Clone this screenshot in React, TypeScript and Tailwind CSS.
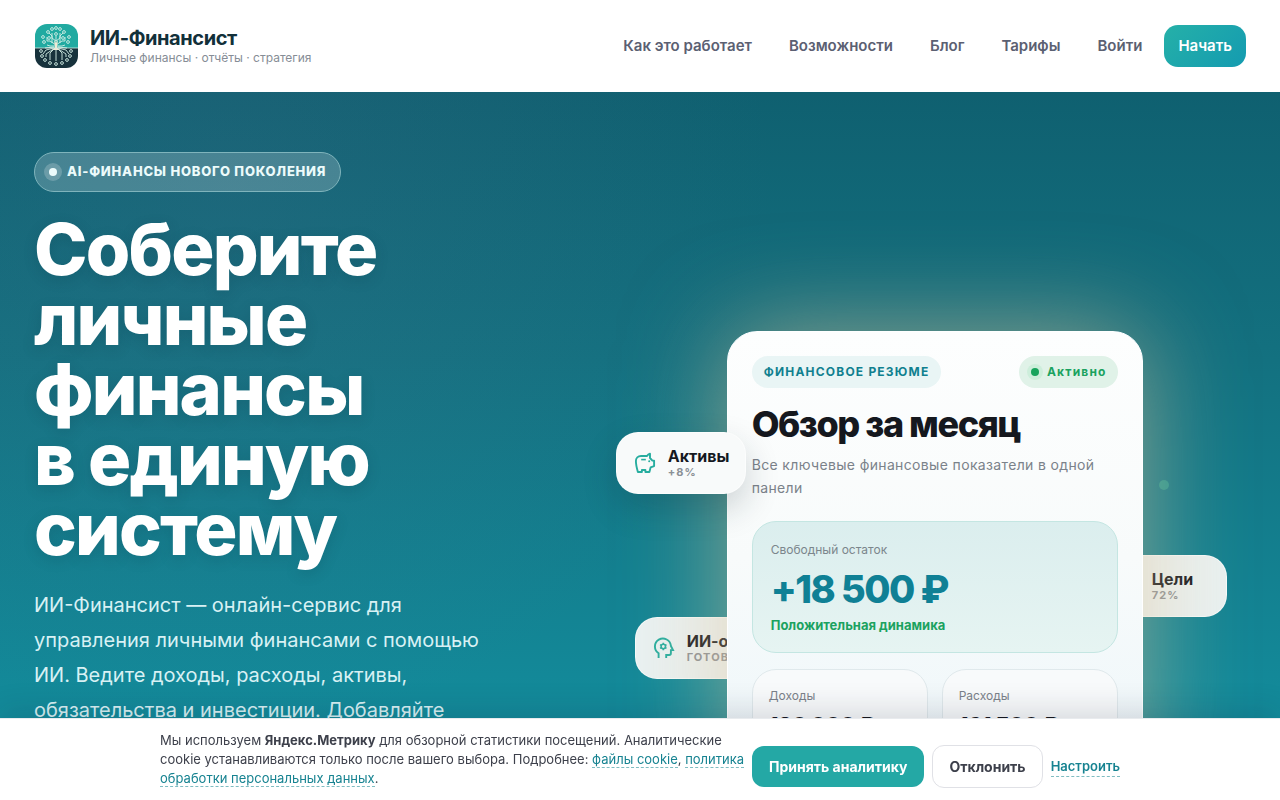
import { ReactNode } from 'react';

const navItems = ['Как это работает', 'Возможности', 'Блог', 'Тарифы'];

const stats = [
  { label: 'Доходы', value: '180 000 ₽' },
  { label: 'Расходы', value: '161 500 ₽' },
];

const branches = [
  'M22 24V12', 'M22 17l-4-3V9', 'M22 17l4-3V9', 'M22 21l-6-4h-3v-4', 'M22 21l6-4h3v-4',
  'M21 22h-5l-3-1', 'M23 22h5l3-1', 'M18 19v-7l-3-3', 'M26 19v-7l3-3', 'M22 23v14',
  'M21 24l-5 5v7', 'M23 24l5 5v7', 'M21 24l-9 6v3', 'M23 24l9 6v3', 'M20 24l-8 2-3 4',
  'M24 24l8 2 3 4', 'M20 23l-9 1', 'M24 23l9 1',
];

const nodes = [
  [22, 4], [18, 5], [26, 5], [14, 8], [30, 8], [9, 13], [35, 13], [15, 14], [29, 14],
  [10, 18], [34, 18], [22, 10], [7, 27], [37, 27], [8, 32], [36, 32], [11, 36], [33, 36],
  [16, 39], [28, 39], [22, 40],
];

const Logo = () => (
  <svg viewBox="0 0 44 44" className="size-11 shrink-0" aria-hidden="true">
    <defs>
      <clipPath id="logo-clip">
        <rect x="1" width="43" height="44" rx="12" />
      </clipPath>
    </defs>
    <g clipPath="url(#logo-clip)">
      <rect width="44" height="24" fill="#21aaa1" />
      <rect y="24" width="44" height="20" fill="#17323c" />
      <g fill="none" stroke="#d5efe6" strokeWidth="0.9">
        {branches.map((d) => (
          <path key={d} d={d} />
        ))}
      </g>
      <path d="M20 16l2 3 2-3-1 7 2 3h-6l2-3z" fill="#f1ead5" />
      <path d="M1 24h43" stroke="#d5efe6" strokeWidth="0.8" />
      {nodes.map(([x, y]) => (
        <circle
          key={`${x}-${y}`}
          cx={x}
          cy={y}
          r="1.4"
          fill={y < 24 ? '#21aaa1' : '#17323c'}
          stroke="#d5efe6"
          strokeWidth="0.9"
        />
      ))}
    </g>
  </svg>
);

const PiggyIcon = () => (
  <svg
    viewBox="0 0 22 22"
    className="size-[22px] shrink-0"
    fill="none"
    stroke="currentColor"
    strokeWidth="1.9"
    strokeLinejoin="round"
    aria-hidden="true"
  >
    <path d="M13 4H7C4 4 1.9 6 1.9 9c0 3.2.9 7.2 2 11h4v-2h3.5v2h4l1.2-4.6 3.5-1.3V8.6h-1.7L16 6V1.8C14.7 2.1 13.7 2.9 13 4z" />
    <path d="M7.2 7.6h4.6" strokeWidth="1.6" />
    <circle cx="15.2" cy="9.3" r="1" fill="currentColor" stroke="none" />
  </svg>
);

const HeadGearIcon = () => (
  <svg
    viewBox="0 0 22 22"
    className="size-[22px] shrink-0"
    fill="none"
    stroke="currentColor"
    strokeWidth="1.9"
    aria-hidden="true"
  >
    <path d="M5.6 21v-4.7A8 8 0 1 1 17.9 9l2.1 4.1h-2.1v3.2c0 1-.7 1.7-1.7 1.7h-3v3" />
    <circle cx="10.3" cy="9.5" r="2.2" strokeWidth="1.6" />
    <path
      d="M10.3 5.8v1.3M10.3 11.9v1.3M7.1 7.65l1.15.65M12.35 10.7l1.15.65M7.1 11.35l1.15-.65M12.35 8.3l1.15-.65"
      strokeWidth="1.6"
    />
  </svg>
);

const TargetIcon = () => (
  <svg
    viewBox="0 0 22 22"
    className="size-[22px] shrink-0"
    fill="none"
    stroke="currentColor"
    strokeWidth="1.8"
    aria-hidden="true"
  >
    <circle cx="11" cy="11" r="9" />
    <circle cx="11" cy="11" r="4" />
  </svg>
);

interface ChipProps {
  className: string;
  icon: ReactNode;
  title: string;
  note: string;
}

const Chip = ({ className, icon, title, note }: ChipProps) => (
  <div
    className={`absolute flex h-[62px] items-center gap-3 rounded-[22px] border border-white/60 px-[17px] text-[#27ad9f] ${className}`}
  >
    {icon}
    <div className="whitespace-nowrap">
      <div className="text-base leading-[18px] font-bold text-[#15181e]">{title}</div>
      <div className="text-[11px] leading-[14px] font-bold tracking-widest text-[#8b9096]">{note}</div>
    </div>
  </div>
);

const Header = () => (
  <header className="flex h-[92px] shrink-0 items-center justify-between bg-white px-[34px]">
    <a href="#" className="flex items-center gap-3">
      <Logo />
      <div>
        <div className="text-xl leading-6 font-bold tracking-[-0.02em] text-[#12303a]">
          ИИ-Финансист
        </div>
        <div className="text-xs leading-4 text-[#868d96]">Личные финансы · отчёты · стратегия</div>
      </div>
    </a>
    <nav className="flex items-center text-[15px] font-semibold text-[#5b6072]">
      <div className="hidden items-center gap-[37px] pr-[37px] lg:flex">
        {navItems.map((item) => (
          <a key={item} href="#">
            {item}
          </a>
        ))}
      </div>
      <a href="#">Войти</a>
      <a
        href="#"
        className="ml-[22px] flex h-[42px] items-center rounded-[14px] bg-linear-135 from-[#25b0a8] to-[#149bb0] px-[14px] text-white"
      >
        Начать
      </a>
    </nav>
  </header>
);

const SummaryCard = () => (
  <div className="relative mx-auto w-full max-w-[416px]">
    <Chip
      className="top-[286px] -left-[92px] w-[150px] bg-[#f4f7f7]/95"
      icon={<HeadGearIcon />}
      title="ИИ-отчёт"
      note="ГОТОВ"
    />
    <Chip
      className="top-[224px] -right-[84px] w-[127px] bg-[#f4f7f7]/95"
      icon={<TargetIcon />}
      title="Цели"
      note="72%"
    />
    <div className="absolute top-[149px] -right-[26px] size-[10px] rounded-full bg-[#2fa294]/70" />

    <section className="relative rounded-[30px] border border-white bg-linear-to-b from-[#fdfefe] via-[#f8fbfb] to-[#edf6fa] p-6 shadow-[0_0_100px_rgba(225,195,150,0.6)]">
      <div className="flex items-center justify-between">
        <span className="flex h-8 items-center rounded-full bg-[#e9f5f5] px-3 text-xs font-bold tracking-widest text-[#10808f]">
          ФИНАНСОВОЕ РЕЗЮМЕ
        </span>
        <span className="flex h-8 items-center gap-1 rounded-full bg-[#e0f2e8] px-2 text-xs font-bold tracking-widest text-[#1ba260]">
          <span className="flex size-4 items-center justify-center rounded-full bg-[#cdeedb]">
            <span className="size-2 rounded-full bg-[#17a45c]" />
          </span>
          <span className="pr-[3px]">Активно</span>
        </span>
      </div>
      <h2 className="mt-4 text-[36px] leading-10 font-extrabold tracking-[-0.04em] text-[#15181e]">
        Обзор за месяц
      </h2>
      <p className="mt-[9px] text-sm leading-[23px] tracking-wide text-[#7b828a]">
        Все ключевые финансовые показатели в одной панели
      </p>

      <div className="mt-[22px] rounded-3xl border border-[#c4e6e2] bg-linear-to-b from-[#dbeeee] to-[#e6f4f2] px-[18px] pt-5 pb-[18px]">
        <div className="text-xs leading-4 text-[#7b868c]">Свободный остаток</div>
        <div className="mt-[7px] text-[38px] leading-12 font-extrabold tracking-[-0.04em] text-[#0f8095]">
          +18 500 ₽
        </div>
        <div className="mt-[3px] text-[13px] leading-[18px] font-bold text-[#1ba260]">
          Положительная динамика
        </div>
      </div>

      <div className="mt-4 grid grid-cols-2 gap-[14px]">
        {stats.map((stat) => (
          <div
            key={stat.label}
            className="rounded-3xl border border-[#e0e9ec] bg-[#f8fafb] px-4 py-[18px]"
          >
            <div className="text-xs leading-4 text-[#7b828a]">{stat.label}</div>
            <div className="mt-[5px] text-[22px] leading-8 font-extrabold tracking-tight text-[#15181e]">
              {stat.value}
            </div>
          </div>
        ))}
      </div>
    </section>

    <Chip
      className="top-[101px] -left-[111px] w-[130px] bg-[#f8fafa] shadow-[0_14px_34px_rgba(20,40,50,0.2)]"
      icon={<PiggyIcon />}
      title="Активы"
      note="+8%"
    />
  </div>
);

const CookieBar = () => (
  <div className="fixed inset-x-0 bottom-0 border-t border-[#e8ebee] bg-white px-4 pt-3 pb-3 shadow-[0_-8px_30px_rgba(20,30,50,0.14)]">
    <div className="mx-auto flex max-w-[960px] flex-wrap items-end gap-1 md:flex-nowrap">
      <p className="text-[13px] leading-[19px] text-[#3d404b] md:flex-1">
        Мы используем <b>Яндекс.Метрику</b> для обзорной статистики посещений. Аналитические cookie
        устанавливаются только после вашего выбора. Подробнее:{' '}
        <a href="#" className="border-b border-dashed border-[#7fbdc2] text-[#178391]">
          файлы cookie
        </a>
        ,{' '}
        <a href="#" className="border-b border-dashed border-[#7fbdc2] text-[#178391]">
          политика обработки персональных данных
        </a>
        .
      </p>
      <div className="flex shrink-0 items-center gap-2">
        <button className="h-[41px] rounded-xl bg-[#24a8a5] px-[17px] text-sm font-bold text-white">
          Принять аналитику
        </button>
        <button className="h-[43px] rounded-xl border border-[#e0e1e6] bg-white px-4 text-sm font-bold text-[#3d404b]">
          Отклонить
        </button>
        <button className="border-b border-dashed border-[#7fbdc2] text-[13px] leading-5 font-semibold text-[#178391]">
          Настроить
        </button>
      </div>
    </div>
  </div>
);

const App = () => (
  <div className="flex h-screen flex-col overflow-hidden font-['Inter',sans-serif]">
    <Header />
    <main className="flex-1 overflow-hidden bg-[radial-gradient(circle_at_18%_14%,rgba(90,110,150,0.16),transparent_45%),linear-gradient(180deg,#0f6070_0%,#13707f_36%,#138b9b_88%)] px-[34px] pt-15">
      <div className="grid gap-20 lg:grid-cols-[minmax(0,9fr)_minmax(0,11fr)]">
        <div>
          <div className="inline-flex h-10 items-center gap-[5px] rounded-full border border-[#7fb4bc] bg-white/20 pr-[14px] pl-[9px] text-[13px] font-extrabold tracking-[0.06em] text-[#ecfbfb]">
            <span className="flex size-[18px] items-center justify-center rounded-full bg-white/20">
              <span className="size-2 rounded-full bg-[#ecfbfb]" />
            </span>
            AI-ФИНАНСЫ НОВОГО ПОКОЛЕНИЯ
          </div>
          <h1 className="mt-[22px] text-[72px] leading-[70px] font-extrabold tracking-tight text-white [text-shadow:0_4px_14px_rgba(10,50,60,0.18)]">
            Соберите личные финансы в&nbsp;единую систему
          </h1>
          <p className="mt-6 max-w-[470px] text-xl leading-[35px] text-[#d8f1f4]">
            ИИ-Финансист — онлайн-сервис для управления личными финансами с помощью ИИ. Ведите
            доходы, расходы, активы, обязательства и инвестиции. Добавляйте
          </p>
        </div>
        <div className="pt-[179px]">
          <SummaryCard />
        </div>
      </div>
    </main>
    <CookieBar />
  </div>
);

export default App;
